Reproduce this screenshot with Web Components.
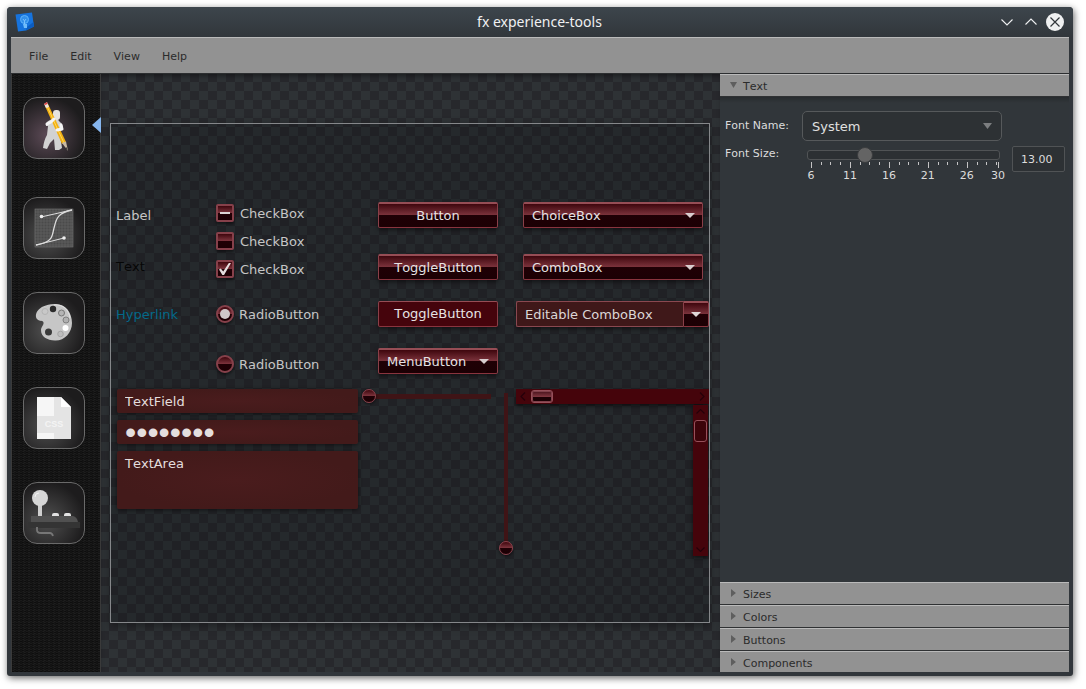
<!DOCTYPE html>
<html lang="en">
<head>
<meta charset="utf-8">
<title>fx experience-tools</title>
<style>
  html { height: 100%; background: #fff; }
  body { margin: 0; padding: 7px 13px 13px 7px; box-sizing: border-box; min-height: 100%; display: flex; font: 11px/14px "DejaVu Sans", Verdana, sans-serif; font-kerning: none; color: #dcdcdc; }
</style>
</head>
<body>
<fx-window heading="fx experience-tools">
  <fx-menubar slot="menu"></fx-menubar>
  <fx-toolbar></fx-toolbar>
  <fx-canvas><fx-preview></fx-preview></fx-canvas>
  <fx-inspector></fx-inspector>
</fx-window>

<script>
const define = (name, render, after) => customElements.define(name, class extends HTMLElement {
  connectedCallback() {
    if (this.shadowRoot) return;
    const t = document.createElement('template');
    t.innerHTML = render(this);
    this.attachShadow({ mode: 'open' }).append(t.content.cloneNode(true));
    if (after) after(this.shadowRoot, this);
  }
});

/* Shared skin for the red glossy controls */
const gloss = 'linear-gradient(#3e060d, #7e353e 50%, #1f0005 50%, #1c0004)';
const controls = `
  *, *::before { box-sizing: border-box; }
  button, select, input, textarea { font: inherit; font-kerning: none; color: inherit; margin: 0; border-radius: 2px; outline: none; }
`;

/* ---------- window frame ---------- */
define('fx-window', el => `
<style>
  :host { display: flex; flex-direction: column; flex: 1; min-width: 0; background: #31363b; border-radius: 4px 4px 3px 3px; padding: 0 4px 4px; box-sizing: border-box; box-shadow: 1px 2px 7px rgba(0,0,0,.6); }
  header { display: grid; grid-template-columns: 1fr auto 1fr; align-items: center; height: 30px; margin: 0 -4px; padding: 0 9px 0 8px; box-sizing: border-box; background: linear-gradient(#3d454c, #31363b); border-radius: 4px 4px 0 0; }
  h1 { margin: 0; font: 14px/20px "Noto Sans", sans-serif; color: #eff0f1; }
  .buttons { justify-self: end; display: flex; gap: 6px; }
  button { border: 0; padding: 0; background: none; width: 18px; height: 18px; }
  svg { display: block; }
  main { flex: 1; display: flex; min-height: 0; }
</style>
<header>
  <svg width="20" height="20" viewBox="0 0 20 20">
    <path d="M0.500 2.500L17 0.500L19 14.500L11 18.500L3 19.500Z" fill="#1673dd"/>
    <path d="M11 18.500L19 14.500L18.500 10L12 15Z" fill="#0b5cc0"/>
    <circle cx="9.500" cy="7.500" r="4" fill="#3390ea" stroke="#5fb2fa" stroke-width="1"/>
    <path d="M8 12h4v4h-3z" fill="#6fbcfb"/><path d="M8 7l1.500 2L11 7M9.500 9v3" stroke="#8accff" stroke-width=".8" fill="none"/>
  </svg>
  <h1>${el.getAttribute('heading')}</h1>
  <div class="buttons">
    <button aria-label="Minimize"><svg width="18" height="18"><path d="M3.500 6.500L9 12L14.500 6.500" fill="none" stroke="#eff0f1" stroke-width="1.100"/></svg></button>
    <button aria-label="Maximize"><svg width="18" height="18"><path d="M3.500 11.500L9 6L14.500 11.500" fill="none" stroke="#eff0f1" stroke-width="1.100"/></svg></button>
    <button aria-label="Close"><svg width="18" height="18"><circle cx="9" cy="9" r="9" fill="#eff0f1"/><path d="M4.500 4.500L13.500 13.500M13.500 4.500L4.500 13.500" stroke="#31363b" stroke-width="1.200"/></svg></button>
  </div>
</header>
<slot name="menu"></slot>
<main><slot></slot></main>`);

define('fx-menubar', () => `
<style>
  :host { display: block; border-bottom: 1px solid #2c2e30; }
  nav { display: flex; align-items: center; gap: 22px; height: 36px; padding: 3px 18px 0; box-sizing: border-box; background: #929292; border-top: 1px solid #bababa; }
  button { border: 0; padding: 0; background: none; font: inherit; font-kerning: none; color: #2b2b2b; }
</style>
<nav><button>File</button><button>Edit</button><button>View</button><button>Help</button></nav>`);

/* ---------- left toolbar ---------- */
const icons = {
  design: `<path d="M23 29Q22 25 27 23L33 20L36 24L39 27Q41 32 38 34L37 38L39 51L36 53H32L31 42L27 46L24 52L20 51Q21 43 24 38L25 29Z" fill="#d2d2d2"/>
    <rect x="30" y="13" width="7" height="10" rx="3" fill="#e6e4e0"/>
    <path d="M22 9L25 7L43 45L39 47Z" fill="#f3b012"/><path d="M23.500 8L41 46" stroke="#ffd75a" stroke-width="1"/>
    <path d="M21 7L24 5L26 10L23 11Z" fill="#efe3dc"/><path d="M21 7L24 5L24.500 7L22 8Z" fill="#e04040"/>
    <path d="M39 46L43 44.500L45 54Z" fill="#c9b9a4"/><path d="M43.300 50L45 54L42.500 51Z" fill="#333"/>
    <path d="M24 27L28 25L31 22M34 33L39 32L38 28" fill="none" stroke="#f4f4f4" stroke-width="3" stroke-linecap="round" stroke-linejoin="round"/>`,
  curve: `<rect x="12" y="12" width="38" height="38" fill="#4a4a4a"/>
    <path d="M12 15h38M12 18h38M12 21h38M12 24h38M12 27h38M12 30h38M12 33h38M12 36h38M12 39h38M12 42h38M12 45h38M12 48h38M15 12v38M18 12v38M21 12v38M24 12v38M27 12v38M30 12v38M33 12v38M36 12v38M39 12v38M42 12v38M45 12v38M48 12v38" stroke="#666" stroke-width=".6"/>
    <rect x="12" y="12" width="38" height="38" fill="none" stroke="#777" stroke-width=".6"/>
    <path d="M13 48C31 45 29 38 31 31S33 16 49 13" fill="none" stroke="#ddd" stroke-width="1.300"/>
    <path d="M18 20L49 13M13 48L41 41" stroke="#ddd"/><circle cx="18.500" cy="19.500" r="1.800" fill="#eee"/><circle cx="41" cy="41" r="1.800" fill="#eee"/>`,
  palette: `<path d="M31 12C42 11 49 20 49 31C49 41 41 49 32 48.500C24 48 18 45 18 38C18 35 21 33 20.500 30.500C20 28 17 30 14 27C11 23 14 13 31 12Z" fill="#c6c6c6"/>
    <path d="M31 13C40 12 46 18 47 26" stroke="#e2e2e2" fill="none"/>
    <circle cx="30" cy="17" r="3.200" fill="#2a2a2a"/><circle cx="25.500" cy="40" r="3.500" fill="#3a3a3a"/>
    <circle cx="38.500" cy="21" r="3" fill="#b5b5b5" stroke="#777"/><circle cx="43" cy="28" r="3" fill="#b0b0b0" stroke="#808080"/>
    <circle cx="42.500" cy="36" r="3" fill="#fff"/><circle cx="37.500" cy="42" r="2.800" fill="#bdbdbd" stroke="#999" stroke-width=".7"/><circle cx="22" cy="19.500" r="3" fill="#c8c8c8" stroke="#aaa" stroke-width=".7"/>`,
  css: `<path d="M14 10H38L48 20V52H14Z" fill="#e4e4e4"/><path d="M14 10H31V29H14ZM14 46H31V52H14Z" fill="#f6f6f6"/><path d="M38 10L48 20H38Z" fill="#fff"/>
    <text x="31" y="40" text-anchor="middle" font-family="Liberation Sans" font-weight="bold" font-size="9" fill="#f4f4f4">CSS</text>`,
  joystick: `<rect x="15" y="20" width="4" height="14" fill="#cfcfcf"/><circle cx="17" cy="16" r="8" fill="#d6d6d6"/><path d="M12 15Q12 11 16 11" stroke="#f2f2f2" fill="none"/>
    <path d="M29 34V33Q29 31 31 31H34Q36 31 36 33V34ZM41 34V33Q41 31 43 31H46Q48 31 48 33V34Z" fill="#e2e2e2"/>
    <path d="M8 34H50Q54 35 55 40H8Z" fill="#505050"/><rect x="5" y="40" width="52" height="6" fill="#343434"/>
    <path d="M14 45V48Q14 51 18 51H27Q29 51 30 54" stroke="#777" stroke-width="1.800" fill="none"/>`
};
define('fx-tool-button', el => `
<style>
  :host { display: block; position: relative; --glow: #505050; }
  :host([selected]) { --glow: #5c4a56; }
  button { display: block; width: 62px; height: 62px; padding: 0; border: 1px solid #6a6a6a; border-radius: 14px; background: radial-gradient(circle at 38% 62%, var(--glow), #1d1c1d 72%); }
  svg { display: block; margin: -1px; }
  i { display: none; }
  :host([selected]) i { display: block; position: absolute; right: 0; top: 20px; border: 8px solid transparent; border-left: 0; border-right: 9px solid #86b6ee; }
</style>
<button aria-label="${el.getAttribute('icon')}"><svg width="62" height="62">${icons[el.getAttribute('icon')]}</svg></button><i></i>`);

define('fx-toolbar', () => `
<style>
  :host { display: flex; flex: none; flex-direction: column; gap: 33px; width: 90px; box-sizing: border-box; padding: 23px 0 0 11px; border: solid #3a3a3a; border-width: 0 1px;
    background: repeating-conic-gradient(rgba(0,0,0,.3) 0 25%, transparent 0 50%) 0 0 / 4px 2px, repeating-linear-gradient(rgba(0,0,0,.25) 0 1px, transparent 1px 3px), repeating-linear-gradient(90deg, #181818 0 1px, #1e1e1e 1px 3px, #1a1a1a 3px 5px); }
  .top { padding-bottom: 5px; }
  fx-tool-button { margin-right: -1px; }
</style>
<div class="top"><fx-tool-button icon="design" selected></fx-tool-button></div>
<fx-tool-button icon="curve"></fx-tool-button>
<fx-tool-button icon="palette"></fx-tool-button>
<fx-tool-button icon="css"></fx-tool-button>
<fx-tool-button icon="joystick"></fx-tool-button>`);

/* ---------- red controls ---------- */
define('fx-button', el => `
<style>${controls}
  :host { display: block; width: 120px; color: #e6e2e3; }
  button { display: flex; justify-content: center; align-items: center; width: 100%; height: 26px; padding: 0 8px; border: 1px solid; border-top-width: 2px; border-color: #964d55 #8a3f48 #8a343e; background: ${gloss}; box-shadow: 0 2px 4px rgba(0,0,0,.5); }
  :host([pressed]) button { background: #45040c; border-top-width: 1px; }
  :host([menu]) button { justify-content: space-between; }
  i { display: none; }
  :host([menu]) i { display: block; border: 5px solid transparent; border-top-color: #d8cdce; border-bottom: 0; }
</style>
<button ${el.hasAttribute('pressed') ? 'aria-pressed="true"' : ''}><span><slot></slot></span><i></i></button>`);

define('fx-choice', el => `
<style>${controls}
  :host { display: grid; align-items: center; width: 180px; color: #e6e2e3; }
  select, i { grid-area: 1 / 1; }
  select { appearance: none; width: 100%; height: 26px; padding: 0 24px 0 8px; border: 1px solid; border-top-width: 2px; border-color: #964d55 #8a3f48 #8a343e; background: ${gloss}; box-shadow: 0 2px 4px rgba(0,0,0,.5); }
  i { justify-self: end; margin-right: 8px; border: 5px solid transparent; border-top-color: #d8cdce; border-bottom: 0; pointer-events: none; }
</style>
<select aria-label="${el.getAttribute('value')}"><option>${el.getAttribute('value')}</option></select><i></i>`);

define('fx-editable-combo', el => `
<style>${controls}
  :host { display: flex; color: #dcd6d6; box-shadow: 0 2px 4px rgba(0,0,0,.5); }
  input { flex: 1; min-width: 0; height: 26px; padding: 0 8px; border: 1px solid #8a4850; border-right: 0; background: #3f1819; border-radius: 2px 0 0 2px; }
  button { width: 26px; height: 26px; padding: 0; display: flex; align-items: center; justify-content: center; border: 1px solid; border-top-width: 2px; border-color: #964d55 #8a3f48 #8a343e; background: ${gloss}; border-radius: 0 2px 2px 0; }
  i { border: 5px solid transparent; border-top-color: #e0d6d7; border-bottom: 0; }
</style>
<input type="text" value="${el.getAttribute('value')}" aria-label="${el.getAttribute('value')}"><button aria-label="Show options"><i></i></button>`);

define('fx-check', () => `
<style>${controls}
  :host { display: block; color: #c6c6c6; }
  label { display: flex; align-items: center; gap: 6px; height: 18px; }
  span { padding-top: 2px; }
  input { appearance: none; flex: none; width: 18px; height: 18px; border: 2px solid #86404a; background: ${gloss}; box-shadow: 0 2px 3px rgba(0,0,0,.5); display: grid; place-items: center; }
  input::before { content: ""; }
  input:indeterminate::before { width: 10px; height: 2px; background: #dcd3d4; }
  input:checked::before { width: 12px; height: 12px; background: #e4dcdd; clip-path: polygon(0 55%, 15% 45%, 35% 70%, 82% 0, 100% 0, 42% 100%, 28% 100%); }
</style>
<label><input type="checkbox"><span><slot></slot></span></label>`, (root, el) => {
  const box = root.querySelector('input');
  box.checked = el.getAttribute('state') === 'on';
  box.indeterminate = el.getAttribute('state') === 'mixed';
});

define('fx-radio', el => `
<style>${controls}
  :host { display: block; color: #c6c6c6; }
  label { display: flex; align-items: center; gap: 5px; height: 26px; }
  span { padding-top: 2px; }
  input { appearance: none; flex: none; width: 18px; height: 18px; border-radius: 50%; border: 2px solid #86404a; background: ${gloss}; box-shadow: 0 2px 3px rgba(0,0,0,.5); display: grid; place-items: center; }
  input:checked::before { content: ""; width: 10px; height: 10px; border-radius: 50%; background: #cfc8c9; }
</style>
<label><input type="radio" ${el.hasAttribute('on') ? 'checked' : ''}><span><slot></slot></span></label>`);

define('fx-red-slider', el => `
<style>
  :host { display: block; }
  input { appearance: none; display: block; margin: 0; width: 100%; height: 14px; outline: none; background: linear-gradient(#3f1416, #3f1416) center / calc(100% - 2px) 5px no-repeat; }
  :host([vertical]) input { writing-mode: vertical-lr; direction: rtl; width: 14px; height: 100%; background-size: 4px calc(100% - 8px); }
  input::-webkit-slider-thumb { appearance: none; width: 14px; height: 14px; border-radius: 50%; border: 1px solid #8a414b; background: ${gloss}; box-shadow: 0 1px 3px rgba(0,0,0,.6); }
</style>
<input type="range" value="0" aria-label="${el.hasAttribute('vertical') ? 'Vertical' : 'Horizontal'} slider">`);

define('fx-scrollbar', el => {
  const v = el.hasAttribute('vertical');
  return `
<style>
  :host { display: flex; align-items: center; box-sizing: border-box; background: #45040b; box-shadow: 0 2px 4px rgba(0,0,0,.6); height: 15px; gap: 5px; padding: 0 4px; }
  :host([vertical]) { flex-direction: column; width: 15px; height: 151px; padding: 4px 0; gap: 6px; }
  .thumb { box-sizing: border-box; width: 22px; height: 13px; border: 1px solid #96505a; border-radius: 3px; background: linear-gradient(#45101a, #7e353e 50%, #1c0004 50%) padding-box; box-shadow: inset 0 0 0 1px #80404a; }
  :host([vertical]) .thumb { width: 13px; height: 22px; background: #3c040a; box-shadow: none; }
  .space { flex: 1; }
  svg { display: block; }
  path { fill: none; stroke: #24000a; stroke-width: 1.100; }
</style>
<svg width="${v ? 9 : 6}" height="${v ? 5 : 9}"><path d="${v ? 'M.5 4.500L4.500 .5L8.500 4.500' : 'M5 .5L1 4.500L5 8.500'}"/></svg>
<div class="thumb"></div><div class="space"></div>
<svg width="${v ? 9 : 6}" height="${v ? 5 : 9}"><path d="${v ? 'M.5 .5L4.500 4.500L8.500 .5' : 'M1 .5L5 4.500L1 8.500'}"/></svg>`;
}, (root, el) => {
  el.setAttribute('role', 'scrollbar');
});

/* ---------- preview area ---------- */
define('fx-canvas', () => `
<style>
  :host { display: flex; align-items: center; flex: 1; min-width: 0; box-sizing: border-box; padding: 0 10px 0 9px; background: repeating-conic-gradient(#2e3235 0 25%, #27282c 0 50%) -1px -1px / 18px 18px; box-shadow: inset 0 4px 5px -2px rgba(0,0,0,.4); }
</style>
<slot></slot>`);

define('fx-preview', () => `
<style>${controls}
  :host { display: block; flex: 1; min-width: 0; min-height: 500px; box-sizing: border-box; border: 1px solid #85878a; padding: 78px 0 0 5px; background: rgba(8,8,12,.22); box-shadow: 0 3px 8px rgba(0,0,0,.35); font-size: 13px; line-height: 16px; color: #c6c6c6; overflow: hidden; }
  .rows { display: grid; grid-template-columns: 100px 162px 138px minmax(0, 1fr); grid-template-rows: 52px 47px 47px 41px; align-items: start; }
  .name { line-height: 28px; }
  .text { line-height: 26px; color: #060606; }
  a { color: #03698a; text-decoration: none; }
  .stack { grid-row: span 2; display: flex; flex-direction: column; }
  .checks { gap: 10px; padding-top: 2px; }
  .radios { gap: 24px; }
  .right { padding-left: 7px; }
  .lower { display: grid; grid-template-columns: 241px 130px 14px minmax(0, 1fr); column-gap: 4px; padding-left: 1px; align-items: start; }
  .fields { display: flex; flex-direction: column; gap: 7px; }
  .fields input, .fields textarea { display: block; width: 100%; height: 24px; padding: 0 8px; border: 0; color: #e4dede; background: radial-gradient(farthest-side, #4a1c1d, #431a1a); box-shadow: 0 1px 4px rgba(0,0,0,.55); }
  .fields [type="password"] { font: 32px/24px "Liberation Sans", Arial, sans-serif; }
  .fields textarea { height: 58px; padding: 5px 8px; resize: none; }
  .v { height: 166px; margin-left: 3px; }
  .bars { display: flex; flex-direction: column; gap: 1px; margin-left: 2px; }
  .end { align-self: flex-end; margin-right: 1px; }
</style>
<div class="rows">
  <span class="name">Label</span>
  <div class="stack checks"><fx-check state="mixed">CheckBox</fx-check><fx-check>CheckBox</fx-check><fx-check state="on">CheckBox</fx-check></div>
  <fx-button>Button</fx-button>
  <div class="right"><fx-choice value="ChoiceBox"></fx-choice></div>
  <span class="text">Text</span>
  <fx-button>ToggleButton</fx-button>
  <div class="right"><fx-choice value="ComboBox"></fx-choice></div>
  <a class="name" href="#">Hyperlink</a>
  <div class="stack radios"><fx-radio on>RadioButton</fx-radio><fx-radio>RadioButton</fx-radio></div>
  <fx-button pressed>ToggleButton</fx-button>
  <fx-editable-combo value="Editable ComboBox"></fx-editable-combo>
  <span></span>
  <fx-button menu>MenuButton</fx-button>
</div>
<div class="lower">
  <div class="fields">
    <input type="text" value="TextField" aria-label="Text field">
    <input type="password" value="password" aria-label="Password">
    <textarea aria-label="Text area">TextArea</textarea>
  </div>
  <fx-red-slider></fx-red-slider>
  <fx-red-slider vertical class="v"></fx-red-slider>
  <div class="bars"><fx-scrollbar></fx-scrollbar><fx-scrollbar vertical class="end"></fx-scrollbar></div>
</div>`);

/* ---------- right inspector ---------- */
define('fx-pane', el => `
<style>
  :host { display: flex; flex-direction: column; }
  :host([open]) { flex: 1; }
  button { display: flex; align-items: center; gap: 6px; width: 100%; height: 23px; box-sizing: border-box; padding: 2px 10px 0; border: solid; border-width: 1px 0; border-color: #bababa transparent #2f3133; background: #929292 padding-box; font: inherit; font-kerning: none; color: #2b2b2b; text-align: left; }
  i { width: 7px; height: 8px; margin-bottom: 3px; background: #5e5e5e; clip-path: polygon(14% 0, 85% 50%, 14% 100%); }
  :host([open]) i { clip-path: polygon(0 14%, 100% 14%, 50% 86%); }
</style>
<button aria-expanded="${el.hasAttribute('open')}"><i></i>${el.getAttribute('heading')}</button><slot></slot>`);

define('fx-tick-slider', () => {
  let ticks = '';
  for (let n = 0; n < 20; n++) ticks += `<rect x="${Math.round(n * 9.74)}" width="1" height="${n % 4 ? 3 : 6}"/>`;
  return `
<style>
  :host { display: block; padding: 4px 2px 0 5px; }
  .track { height: 10px; box-sizing: border-box; border: 1px solid #505355; border-radius: 3px; background: #2c3033; display: flex; align-items: center; }
  input { appearance: none; flex: 1; min-width: 0; margin: 0 -5px; height: 16px; background: none; outline: none; }
  input::-webkit-slider-thumb { appearance: none; width: 16px; height: 16px; border-radius: 50%; background: #646464; border: 1px solid #3a3c3e; box-sizing: border-box; }
  svg { display: block; width: 100%; height: 6px; margin-top: 2px; padding: 0 1px 0 4px; box-sizing: border-box; fill: #c4c4c4; }
  .labels { display: grid; grid-template-columns: 5fr 5fr 5fr 5fr 4fr 0; padding: 1px 2px 0 4px; line-height: 14px; }
  .labels span { width: 0; display: flex; justify-content: center; }
</style>
<div class="track"><input type="range" min="6" max="30" value="13" aria-label="Font Size"></div>
<svg viewBox="0 0 188 6" preserveAspectRatio="none">${ticks}<rect x="187" width="1" height="6"/></svg>
<div class="labels"><span>6</span><span>11</span><span>16</span><span>21</span><span>26</span><span>30</span></div>`;
});

define('fx-font-form', () => `
<style>
  :host { display: grid; grid-template-columns: 77px minmax(0, 1fr) 63px; row-gap: 5px; align-items: start; padding: 14px 4px 0 5px; background: linear-gradient(rgba(0,0,0,.2), transparent 6px); }
  .name { line-height: 30px; }
  .choice { display: grid; align-items: center; grid-column: 2; }
  select, i { grid-area: 1 / 1; }
  select { appearance: none; width: 100%; height: 30px; margin: 0; padding: 0 9px; font-family: inherit; font-size: 13px; font-kerning: none; color: #e0e0e0; border: 1px solid #56595b; border-radius: 5px; background: #2d3134; }
  i { justify-self: end; margin-right: 10px; width: 9px; height: 6px; background: #7c7e80; clip-path: polygon(0 0, 100% 0, 50% 100%); pointer-events: none; }
  .size { grid-column: 1; line-height: 16px; }
  .value { box-sizing: border-box; width: 53px; height: 26px; margin: 0 0 0 10px; padding: 0 8px; font: inherit; color: #dcdcdc; background: #2d3134; border: 1px solid #505355; border-radius: 2px; }
</style>
<label class="name" for="family">Font Name:</label>
<div class="choice"><select id="family"><option>System</option></select><i></i></div>
<label class="size" for="size">Font Size:</label>
<fx-tick-slider></fx-tick-slider>
<input class="value" id="size" type="text" value="13.00">`);

define('fx-inspector', () => `
<style>
  :host { display: flex; flex-direction: column; flex: none; width: 349px; overflow: hidden; background: #31363a; }
  .panes { display: flex; flex-direction: column; flex: 1; margin-bottom: -2px; }
</style>
<div class="panes">
  <fx-pane heading="Text" open><fx-font-form></fx-font-form></fx-pane>
  <fx-pane heading="Sizes"></fx-pane>
  <fx-pane heading="Colors"></fx-pane>
  <fx-pane heading="Buttons"></fx-pane>
  <fx-pane heading="Components"></fx-pane>
</div>`);
</script>
</body>
</html>
